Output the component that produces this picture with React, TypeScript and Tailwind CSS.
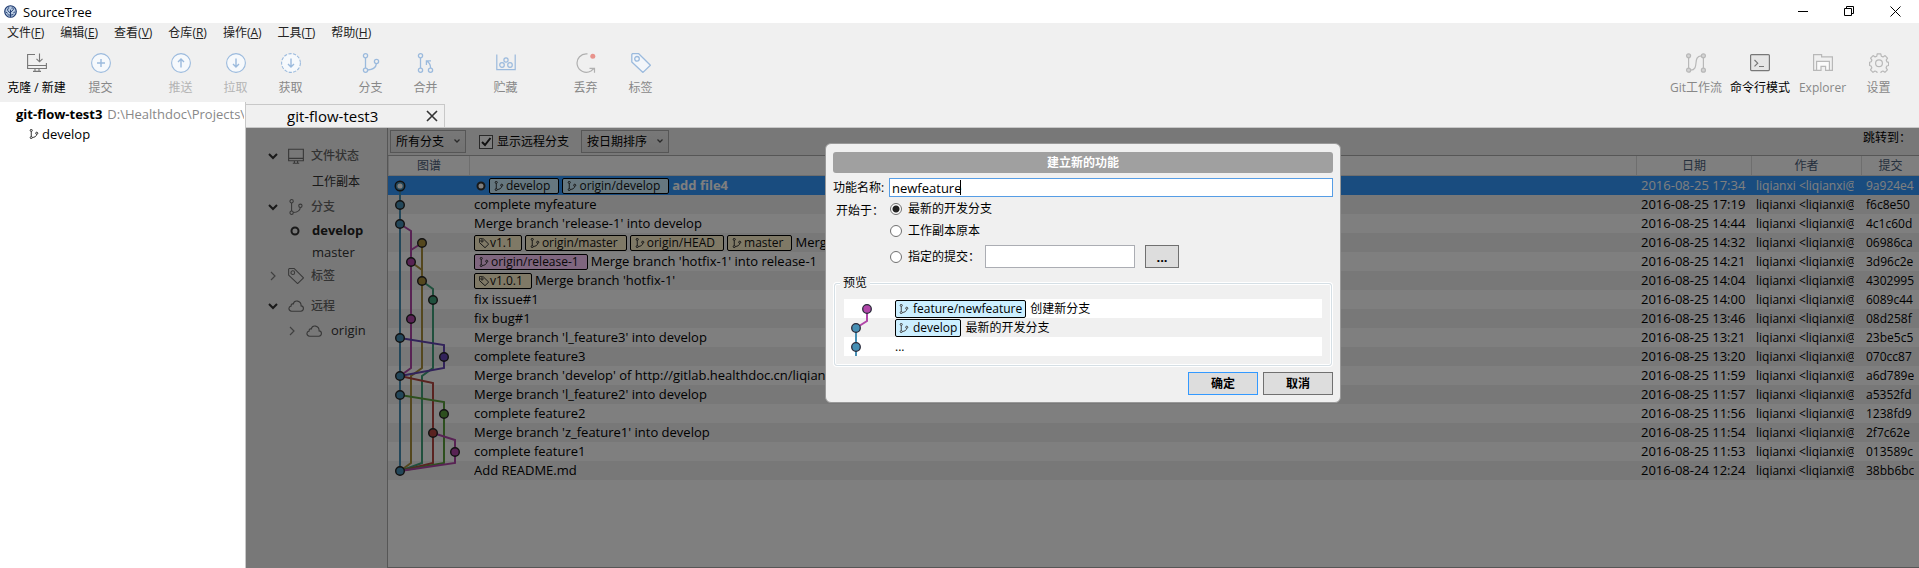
import React from "react";

type IconProps = { className?: string };

const BLUE = "#9bbadd";

function Svg({ className = "size-5", children }: IconProps & { children: React.ReactNode }) {
  return (
    <svg viewBox="0 0 20 20" fill="none" className={className} aria-hidden="true">
      {children}
    </svg>
  );
}

const CloneIcon = () => (
  <Svg>
    <path d="M8 1.5H.6v14h18.8V10M.6 12.5h18.8M8 15.5v3M12 15.5v3M6 18.4h8" stroke="#777" strokeWidth="1.1" />
    <path d="M12.5 .5v8M9.5 5.8l3 3 3-3" stroke="#777" strokeWidth="1.1" />
  </Svg>
);
const CircleIcon = ({ d, dashed = false }: { d: string; dashed?: boolean }) => (
  <Svg>
    <circle cx="10" cy="10" r="9.4" stroke={BLUE} strokeWidth="1.1" fill="#f6f9fc" strokeDasharray={dashed ? "3.2 1.4" : undefined} />
    <path d={d} stroke={BLUE} strokeWidth="1.4" />
  </Svg>
);
const PLUS = "M10 6v8M6 10h8";
const ARROW_UP = "M10 14.5V6M7 9l3-3 3 3";
const ARROW_DOWN = "M10 5.5V14M7 11l3 3 3-3";

function BranchIcon({ className = "size-5", color = BLUE, weight = 1.3 }: IconProps & { color?: string; weight?: number }) {
  return (
    <Svg className={className}>
      <g stroke={color} strokeWidth={weight}>
        <circle cx="4.5" cy="2.8" r="2.1" />
        <circle cx="4.5" cy="17.2" r="2.1" />
        <circle cx="15.5" cy="8.5" r="2.1" />
        <path d="M4.5 4.9v10.2M6.6 17C11 16.6 15 15 15.4 10.6" />
      </g>
    </Svg>
  );
}
const MergeIcon = () => (
  <Svg>
    <g stroke={BLUE} strokeWidth="1.3">
      <circle cx="4.5" cy="2.8" r="2.1" />
      <circle cx="4.5" cy="17.2" r="2.1" />
      <circle cx="14.5" cy="17.2" r="2.1" />
      <path d="M4.5 4.9v10.2M14.6 15c0-3-.6-5.2-4-6.8M15 7.8h-4.6v4.2" />
    </g>
  </Svg>
);
const StashIcon = () => (
  <Svg>
    <g stroke={BLUE} strokeWidth="1.2">
      <path d="M.8 1.5v15.2h18.4V1.5" />
      <circle cx="10" cy="7" r="2.1" />
      <circle cx="6" cy="12" r="2.3" />
      <circle cx="14" cy="12" r="2.3" />
    </g>
  </Svg>
);
const DiscardIcon = () => (
  <Svg>
    <path d="M11.5.9A9.2 9.2 0 1 0 15 17.9l3.200-2.600M13.500 15.300h5v4.500" stroke="#b0b0b0" strokeWidth="1.2" />
    <circle cx="16.8" cy="3.2" r="2.5" fill="#e8938c" />
  </Svg>
);
function TagIcon({ className = "size-5", color = BLUE, fill = "none", weight = 1.3 }: IconProps & { color?: string; fill?: string; weight?: number }) {
  return (
    <Svg className={className}>
      <path d="M.8 1.5v7.5L12 19.4l7.4-7.2L8.5 1.5 7.5.6H1.5z" stroke={color} strokeWidth={weight} fill={fill} strokeLinejoin="round" />
      <circle cx="6" cy="5.8" r="2.3" stroke={color} strokeWidth={weight} />
    </Svg>
  );
}
const FlowIcon = () => (
  <Svg>
    <g stroke="#b8b8b8" strokeWidth="1.2" fill="#d4d4d4">
      <path d="M2.6 4v12M17.4 4v12" />
      <path d="M4.6 17.2C14 17 6 3 15.4 2.8" fill="none" />
      <circle cx="2.6" cy="2.8" r="2" />
      <circle cx="2.6" cy="17.2" r="2" />
      <circle cx="17.4" cy="2.8" r="2" />
      <circle cx="17.4" cy="17.2" r="2" />
    </g>
  </Svg>
);
const TerminalIcon = () => (
  <Svg>
    <rect x=".6" y="1.6" width="18.8" height="16" rx="1" stroke="#777" strokeWidth="1.2" fill="#e6e6e6" />
    <path d="M4.5 7l3.2 3.2-3.2 3.2M9 13.5h5" stroke="#777" strokeWidth="1.2" />
  </Svg>
);
const ExplorerIcon = () => (
  <Svg>
    <g stroke="#b8b8b8" strokeWidth="1.2">
      <path d="M3.5 17.4H.6V1.6h8v2.2h10.8v13.6h-3.6" />
      <path d="M3.6 17.4V8.4h12.8v9h-3.8v-4H8v4z" fill="#fafafa" />
    </g>
  </Svg>
);
const GearIcon = () => (
  <Svg>
    <path
      d="M8.2.8h3.6l.5 2.4 1.7.7 2.1-1.3 2.400 2.500-1.300 2 .7 1.700 1.700.5v3.200l-1.800.5-.7 1.800 1.300 2-2.500 2.500-2-1.300-1.700.7-.5 2.300H8.300l-.5-2.300-1.800-.7-2 1.300-2.500-2.500 1.300-2-.7-1.800-1.500-.5V9.300l1.600-.5.7-1.700-1.300-2 2.500-2.500 2 1.300 1.700-.7z"
      stroke="#b8b8b8"
      strokeWidth="1.2"
      strokeLinejoin="round"
    />
    <circle cx="10" cy="10.2" r="3.4" stroke="#b8b8b8" strokeWidth="1.2" />
  </Svg>
);
const ScreenIcon = () => (
  <Svg className="size-4">
    <path d="M.8 1.5h18.4v14.5H.8zM.8 13h18.4M8 16v3M12 16v3M6 19h8" stroke="#707070" strokeWidth="1.4" />
  </Svg>
);
const CloudIcon = () => (
  <Svg className="size-4">
    <path d="M4.5 16.500h11.500c4.400-.4 4.200-6.200.4-6.600C16.500 3 8 1.500 6.500 7.500 4 7 3.800 9 4 10 0 10.800.3 16 4.500 16.500z" stroke="#707070" strokeWidth="1.4" />
  </Svg>
);

function Chevron({ open }: { open?: boolean }) {
  return (
    <svg viewBox="0 0 10 10" fill="none" className="size-[10px] shrink-0" aria-hidden="true">
      <path d={open ? "M1 3l4 4 4-4" : "M3 1l4 4-4 4"} stroke={open ? "#333" : "#808080"} strokeWidth={open ? 2 : 1.2} />
    </svg>
  );
}

const ToolButton = ({ icon, label, tone, width = "w-[55px]" }: { icon: React.ReactNode; label: string; tone: string; width?: string }) => (
  <button className={`flex flex-col items-center gap-[7px] text-xs/4 whitespace-nowrap ${width} ${tone}`}>
    {icon}
    {label}
  </button>
);

const MENUS = [
  ["文件", "F"],
  ["编辑", "E"],
  ["查看", "V"],
  ["仓库", "R"],
  ["操作", "A"],
  ["工具", "T"],
  ["帮助", "H"],
];

type Ref = { kind: "branch" | "tag"; name: string; tone: string };
type Commit = { msg: string; date: string; hash: string; refs?: Ref[] };

const CYAN = "bg-[#ccefff]";
const SAND = "bg-[#fff2cc]";
const PINK = "bg-[#ffccff]";

const COMMITS: Commit[] = [
  {
    msg: "add file4",
    date: "2016-08-25 17:34",
    hash: "9a924e4",
    refs: [
      { kind: "branch", name: "develop", tone: CYAN },
      { kind: "branch", name: "origin/develop", tone: CYAN },
    ],
  },
  { msg: "complete myfeature", date: "2016-08-25 17:19", hash: "f6c8e50" },
  { msg: "Merge branch 'release-1' into develop", date: "2016-08-25 14:44", hash: "4c1c60d" },
  {
    msg: "Merge branch 'hotfix-1'",
    date: "2016-08-25 14:32",
    hash: "06986ca",
    refs: [
      { kind: "tag", name: "v1.1", tone: SAND },
      { kind: "branch", name: "origin/master", tone: SAND },
      { kind: "branch", name: "origin/HEAD", tone: SAND },
      { kind: "branch", name: "master", tone: SAND },
    ],
  },
  {
    msg: "Merge branch 'hotfix-1' into release-1",
    date: "2016-08-25 14:21",
    hash: "3d96c2e",
    refs: [{ kind: "branch", name: "origin/release-1", tone: PINK }],
  },
  {
    msg: "Merge branch 'hotfix-1'",
    date: "2016-08-25 14:04",
    hash: "4302995",
    refs: [{ kind: "tag", name: "v1.0.1", tone: SAND }],
  },
  { msg: "fix issue#1", date: "2016-08-25 14:00", hash: "6089c44" },
  { msg: "fix bug#1", date: "2016-08-25 13:46", hash: "08d258f" },
  { msg: "Merge branch 'l_feature3' into develop", date: "2016-08-25 13:21", hash: "23be5c5" },
  { msg: "complete feature3", date: "2016-08-25 13:20", hash: "070cc87" },
  { msg: "Merge branch 'develop' of http://gitlab.healthdoc.cn/liqianxi", date: "2016-08-25 11:59", hash: "a6d789e" },
  { msg: "Merge branch 'l_feature2' into develop", date: "2016-08-25 11:57", hash: "a5352fd" },
  { msg: "complete feature2", date: "2016-08-25 11:56", hash: "1238fd9" },
  { msg: "Merge branch 'z_feature1' into develop", date: "2016-08-25 11:54", hash: "2f7c62e" },
  { msg: "complete feature1", date: "2016-08-25 11:53", hash: "013589c" },
  { msg: "Add README.md", date: "2016-08-24 12:24", hash: "38bb6bc" },
];

const C = {
  blue: "#468fb4",
  magenta: "#b146a9",
  yellow: "#a98f3c",
  teal: "#41a07a",
  purple: "#6446b4",
  red: "#b44641",
  green: "#5a9f3c",
};

const LINES: [string, string][] = [
  [C.yellow, "M23 86 34 94M34 67V192L23 200V287L12 295"],
  [C.teal, "M34 105 45 113V192L34 200V287L12 295"],
  [C.red, "M12 200 45 207V287L12 295"],
  [C.green, "M12 219 56 226V287L12 295"],
  [C.magenta, "M12 48 23 55V192L12 200M34 67 23 74M45 257 67 264V287L12 295"],
  [C.purple, "M12 162 56 169V192L12 200"],
  [C.blue, "M12 10V295"],
];

const NODES: [number, string][] = [
  [12, C.blue],
  [12, C.blue],
  [12, C.blue],
  [34, C.yellow],
  [23, C.magenta],
  [34, C.yellow],
  [45, C.teal],
  [23, C.magenta],
  [12, C.blue],
  [56, C.purple],
  [12, C.blue],
  [12, C.blue],
  [56, C.green],
  [45, C.red],
  [67, C.magenta],
  [12, C.blue],
];

function GraphSlice({ row }: { row: number }) {
  return (
    <svg viewBox={`0 ${row * 19} 81 19`} className="block h-[19px] w-[81px]" fill="none" aria-hidden="true">
      {LINES.map(([color, d]) => (
        <path key={color} d={d} stroke={color} strokeWidth="2" />
      ))}
      <circle cx={NODES[row][0]} cy={row * 19 + 10} r={row === 0 ? 4.8 : 4.3} fill={NODES[row][1]} stroke="#222" strokeWidth="1.4" />
      {row === 0 && <circle cx="12" cy="10" r="2.6" fill="#fff" />}
    </svg>
  );
}

function RefTag({ kind, name, tone }: Ref) {
  return (
    <span className={`flex h-4 shrink-0 items-center rounded-[2px] border border-black pr-2 pl-1 text-xs/[14px] text-[#111] ${tone}`}>
      {kind === "tag" ? (
        <TagIcon className="mr-px size-[10px]" color="#333" weight={2} />
      ) : (
        <BranchIcon className="mr-[2px] size-[10px]" color="#333" weight={2} />
      )}
      {name}
    </span>
  );
}

const CurrentDot = ({ fill }: { fill: string }) => (
  <svg viewBox="0 0 10 10" className="size-[10px] shrink-0" aria-hidden="true">
    <circle cx="5" cy="5" r="3.5" fill={fill} stroke="#333" strokeWidth="2" />
  </svg>
);

function CommitTable() {
  const head = "border-b border-l border-[#dcdcdc] p-0 text-center text-xs/[19px] font-normal text-[#4c607a]";
  return (
    <table className="w-full table-fixed border-separate border-spacing-0 text-[13px]/[19px] whitespace-nowrap">
      <colgroup>
        <col className="w-[81px]" />
        <col />
        <col className="w-[115px]" />
        <col className="w-[110px]" />
        <col className="w-[58px]" />
      </colgroup>
      <thead>
        <tr>
          <th className={head}>图谱</th>
          <th className={head} />
          <th className={head}>日期</th>
          <th className={head}>作者</th>
          <th className={head}>提交</th>
        </tr>
      </thead>
      <tbody>
        {COMMITS.map((c, i) => (
          <tr key={c.hash} className={i === 0 ? "bg-[#3399ff] text-white" : i % 2 ? "bg-[#f0f0f0]" : "bg-white"}>
            <td className="p-0">
              <GraphSlice row={i} />
            </td>
            <td className="p-0 pl-[5px]">
              <div className="flex h-[19px] items-center gap-[3px] overflow-hidden">
                {i === 0 && (
                  <span className="pl-[2px]">
                    <CurrentDot fill="#fff" />
                  </span>
                )}
                {c.refs?.map((r) => <RefTag key={r.name} {...r} />)}
                <span className={i === 0 ? "font-bold" : ""}>{c.msg}</span>
              </div>
            </td>
            <td className="p-0 pl-[5px]">{c.date}</td>
            <td className="p-0 pr-[7px] pl-[5px] text-xs/[19px]">
              <div className="overflow-hidden">liqianxi &lt;liqianxi@</div>
            </td>
            <td className="p-0 pr-[5px] pl-[5px] text-xs/[19px]">
              <div className="overflow-hidden">{c.hash}</div>
            </td>
          </tr>
        ))}
      </tbody>
    </table>
  );
}

function Dropdown({ label, value, width }: { label: string; value: string; width: string }) {
  return (
    <div className={`relative ${width}`}>
      <select
        aria-label={label}
        className="block h-[23px] w-full appearance-none border border-[#acacac] bg-linear-to-b from-[#f0f0f0] to-[#e5e5e5] pl-[5px] text-xs"
      >
        <option>{value}</option>
      </select>
      <svg viewBox="0 0 8 8" className="pointer-events-none absolute top-[7px] right-[5px] size-2" fill="none" aria-hidden="true">
        <path d="M1.5 2.5 4 5l2.5-2.500" stroke="#555" strokeWidth="1.3" />
      </svg>
    </div>
  );
}

function Section({ icon, label, open, height }: { icon: React.ReactNode; label: string; open?: boolean; height: string }) {
  return (
    <div className={`flex items-center gap-[7px] text-xs font-medium text-[#666] ${height}`}>
      <span className="flex items-center gap-[10px]">
        <Chevron open={open} />
        {icon}
      </span>
      {label}
    </div>
  );
}

function Sidebar() {
  return (
    <nav className="w-[141px] shrink-0 bg-[#f0f0f0] pt-[15px] pl-[22px] text-[#333]">
      <Section icon={<ScreenIcon />} label="文件状态" open height="h-[26px]" />
      <div className="flex h-[26px] items-center pl-11 text-xs">工作副本</div>
      <Section icon={<BranchIcon className="size-4" color="#707070" />} label="分支" open height="h-[23px]" />
      <div className="flex h-[25px] items-center pl-[22px] text-[13px] font-bold text-[#222]">
        <span className="w-[22px]">
          <CurrentDot fill="none" />
        </span>
        develop
      </div>
      <div className="flex h-[19px] items-center pl-11 text-[13px]">master</div>
      <Section icon={<TagIcon className="size-4" color="#707070" />} label="标签" height="h-[28px]" />
      <Section icon={<CloudIcon />} label="远程" open height="h-[31px]" />
      <div className="flex h-5 items-center gap-[9px] pl-[19px] text-[13px]">
        <Chevron />
        <CloudIcon />
        origin
      </div>
    </nav>
  );
}

function RadioRow({ label, checked, children }: { label: string; checked?: boolean; children?: React.ReactNode }) {
  return (
    <div className="flex items-center">
      <label className="flex items-center gap-[6px]">
        <input
          type="radio"
          name="start"
          defaultChecked={checked}
          className="size-3 appearance-none rounded-full border border-[#707070] bg-white checked:bg-[radial-gradient(circle,#222_0_3px,#fff_4px)]"
        />
        {label}
      </label>
      {children}
    </div>
  );
}

const PreviewTag = ({ children }: { children: React.ReactNode }) => (
  <span className="flex h-[18px] items-center gap-1 rounded-[2px] border border-black bg-[#ccefff] px-[3px] text-xs/4">
    <BranchIcon className="size-[10px]" color="#444" weight={2} />
    {children}
  </span>
);

function PreviewRow({ row, tone, children }: { row: number; tone: string; children: React.ReactNode }) {
  return (
    <div className={`flex h-[19px] items-center gap-1 ${tone}`}>
      <svg viewBox={`0 ${row * 19} 47 19`} className="h-[19px] w-[47px]" fill="none" aria-hidden="true">
        <path d="M23 10v12l-11 7" stroke={C.magenta} strokeWidth="2" />
        <path d="M12 29v28" stroke={C.blue} strokeWidth="2" />
        <circle
          cx={row === 0 ? 23 : 12}
          cy={row * 19 + 10}
          r="4.3"
          fill={row === 0 ? C.magenta : C.blue}
          stroke="#2a2a3a"
          strokeWidth="1.3"
        />
      </svg>
      {children}
    </div>
  );
}

function FeatureDialog() {
  const button = "h-[23px] w-[70px] border bg-[#ddd] font-bold";
  return (
    <div role="dialog" aria-labelledby="dlg-title" className="w-[516px] rounded-[6px] border border-[#999] bg-[#f0f0f0] p-[7px] pt-2 text-xs text-black">
      <h2 id="dlg-title" className="rounded-[3px] bg-[#a0a0a0] text-center text-xs/[21px] font-bold text-white">
        建立新的功能
      </h2>
      <div className="mt-[5px] flex items-center">
        <label htmlFor="feature-name" className="w-14">
          功能名称:
        </label>
        <div className="relative flex-1">
          <input
            id="feature-name"
            defaultValue="newfeature"
            className="block h-[19px] w-full border border-[#569de5] bg-white px-[2px] text-[13px] outline-none"
          />
          <span className="absolute top-[2px] left-[71px] h-[15px] w-px bg-black" />
        </div>
      </div>
      <div className="mt-1 flex">
        <span className="w-[57px] pt-[2px] pl-[3px]">开始于：</span>
        <div className="flex flex-1 flex-col gap-[6px]">
          <RadioRow label="最新的开发分支" checked />
          <RadioRow label="工作副本原本" />
          <RadioRow label="指定的提交：">
            <input aria-label="指定的提交" className="ml-[5px] h-[23px] w-[150px] border border-[#abadb3] bg-white" />
            <button aria-label="选择提交" className="ml-[10px] h-[23px] w-[34px] border border-[#707070] bg-[#ddd] text-[13px]/5 font-bold">
              ...
            </button>
          </RadioRow>
        </div>
      </div>
      <fieldset className="mx-px mt-[7px] rounded-[3px] border border-[#d5dfe5] px-[9px] pb-[9px] shadow-[0_0_0_1px_#fff,inset_0_0_0_1px_#fff]">
        <legend className="-ml-1 bg-[#f0f0f0] px-[3px] text-xs/4">预览</legend>
        <div className="pt-2">
          <PreviewRow row={0} tone="bg-white">
            <PreviewTag>feature/newfeature</PreviewTag>
            创建新分支
          </PreviewRow>
          <PreviewRow row={1} tone="bg-[#f0f0f0]">
            <PreviewTag>develop</PreviewTag>
            最新的开发分支
          </PreviewRow>
          <PreviewRow row={2} tone="bg-white">
            ...
          </PreviewRow>
        </div>
      </fieldset>
      <div className="mt-[6px] flex justify-end gap-[5px]">
        <button className={`${button} border-[#3399ff]`}>确定</button>
        <button className={`${button} border-[#707070]`}>取消</button>
      </div>
    </div>
  );
}

export default function App() {
  return (
    <div className="flex min-h-screen flex-col bg-[#f0f0f0] font-['Open_Sans','Noto_Sans_CJK_SC',sans-serif] text-black">
      <header>
        <div className="flex h-[23px] items-center bg-white pr-[18px] pl-1">
          <svg viewBox="0 0 14 14" className="size-[13px]" aria-hidden="true">
            <circle cx="7" cy="7" r="6.2" fill="#b9cbe2" stroke="#1d3a70" strokeWidth="1.3" />
            <path
              d="M7 13V5M7 9 4 6M7 8l3-3M4 9 2 7.500M10 8.500l2-1.200M5 4V2.500M8.500 4l.5-1.500M7 11l-3-.5M7 11l3-.8M4 6V4M10 5V3.500"
              stroke="#1d3a70"
              strokeWidth="1"
              fill="none"
            />
          </svg>
          <h1 className="ml-[6px] flex-1 text-[13px]/5">SourceTree</h1>
          <div className="flex items-center gap-[35px]">
            <button aria-label="最小化">
              <svg viewBox="0 0 11 11" className="size-[11px]" stroke="#000">
                <path d="M0 5.500h10" />
              </svg>
            </button>
            <button aria-label="还原">
              <svg viewBox="0 0 11 11" className="size-[11px]" fill="none" stroke="#000">
                <path d="M.5 2.500h7v7h-7zM2.500 2.500v-2h7v7h-2" />
              </svg>
            </button>
            <button aria-label="关闭">
              <svg viewBox="0 0 11 11" className="size-[11px]" stroke="#000">
                <path d="M.5.500l10 10M10.500.5l-10 10" />
              </svg>
            </button>
          </div>
        </div>
        <nav className="flex h-5 items-center gap-4 pl-[7px] text-xs text-[#222]">
          {MENUS.map(([name, key]) => (
            <button key={key}>
              {name}(<u>{key}</u>)
            </button>
          ))}
        </nav>
        <div className="flex h-[59px] justify-between pt-[10px] pr-[13px]">
          <div className="flex gap-[25px]">
            <div className="flex">
              <ToolButton icon={<CloneIcon />} label="克隆 / 新建" tone="text-black" width="w-[73px]" />
              <ToolButton icon={<CircleIcon d={PLUS} />} label="提交" tone="text-[#888]" />
            </div>
            <div className="flex">
              <ToolButton icon={<CircleIcon d={ARROW_UP} />} label="推送" tone="text-[#b4b4b4]" />
              <ToolButton icon={<CircleIcon d={ARROW_DOWN} />} label="拉取" tone="text-[#b4b4b4]" />
              <ToolButton icon={<CircleIcon d={ARROW_DOWN} dashed />} label="获取" tone="text-[#888]" />
            </div>
            <div className="flex">
              <ToolButton icon={<BranchIcon />} label="分支" tone="text-[#888]" />
              <ToolButton icon={<MergeIcon />} label="合并" tone="text-[#888]" />
            </div>
            <ToolButton icon={<StashIcon />} label="贮藏" tone="text-[#888]" />
            <div className="flex">
              <ToolButton icon={<DiscardIcon />} label="丢弃" tone="text-[#888]" />
              <ToolButton icon={<TagIcon fill="#f3f6fa" />} label="标签" tone="text-[#888]" />
            </div>
          </div>
          <div className="flex">
            <ToolButton icon={<FlowIcon />} label="Git工作流" tone="text-[#888]" width="w-[60px]" />
            <ToolButton icon={<TerminalIcon />} label="命令行模式" tone="text-black" width="w-[68px]" />
            <ToolButton icon={<ExplorerIcon />} label="Explorer" tone="text-[#888]" width="w-[57px]" />
            <ToolButton icon={<GearIcon />} label="设置" tone="text-[#888]" />
          </div>
        </div>
      </header>

      <div className="flex flex-1">
        <aside className="w-[245px] shrink-0 bg-white pt-[2px] pr-px text-[13px]/5">
          <div className="flex overflow-hidden pl-4 whitespace-nowrap">
            <b className="mr-[5px]">git-flow-test3</b>
            <span className="text-[#888]">D:\Healthdoc\Projects\t</span>
          </div>
          <div className="flex items-center gap-[3px] pl-[29px]">
            <BranchIcon className="size-[10px]" color="#333" weight={2} />
            develop
          </div>
        </aside>

        <main className="flex min-w-0 flex-1 flex-col border-l border-[#c8c8c8]">
          <div className="flex h-[26px] items-end border-b border-[#c8c8c8]">
            <div className="flex h-[23px] w-[199px] items-center border-t border-r border-[#c8c8c8] pr-[6px]">
              <span className="flex-1 pl-[41px] text-[15px]/5">git-flow-test3</span>
              <button aria-label="关闭标签页">
                <svg viewBox="0 0 12 12" className="size-3" stroke="#333" strokeWidth="1.6">
                  <path d="M1 1l10 10M11 1 1 11" />
                </svg>
              </button>
            </div>
          </div>

          <div className="relative flex flex-1 bg-[#f0f0f0]">
            <Sidebar />
            <section className="min-w-0 flex-1 border-b border-l border-[#acacac] bg-white">
              <div className="flex h-7 items-center border-b border-[#acacac] bg-[#f0f0f0] pr-[8px] pl-[2px] text-xs">
                <Dropdown label="分支筛选" value="所有分支" width="w-[76px]" />
                <label className="ml-[13px] flex items-center gap-1">
                  <input type="checkbox" defaultChecked className="sr-only" />
                  <svg viewBox="0 0 14 14" className="size-[14px]" fill="none" aria-hidden="true">
                    <rect x=".5" y=".5" width="13" height="13" fill="#fff" stroke="#555" />
                    <path d="M3 7l3 3 5.500-7" stroke="#222" strokeWidth="2" />
                  </svg>
                  显示远程分支
                </label>
                <Dropdown label="排序方式" value="按日期排序" width="ml-3 w-[88px]" />
                <span className="ml-auto pb-2">跳转到：</span>
              </div>
              <CommitTable />
            </section>

            <div className="absolute inset-0 flex items-start justify-center bg-black/50 pt-[15px] pl-px">
              <FeatureDialog />
            </div>
          </div>
        </main>
      </div>
    </div>
  );
}
